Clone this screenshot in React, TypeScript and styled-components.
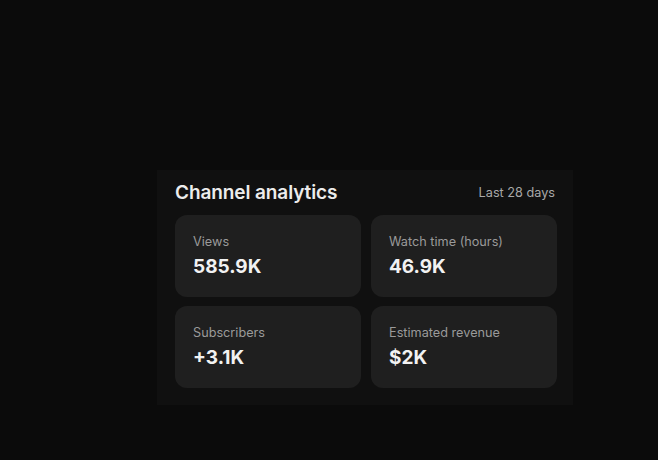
import React from "react";
import styled, { createGlobalStyle } from "styled-components";

const GlobalStyle = createGlobalStyle`
    html, body {
        margin: 0;
        padding: 0;
        background: #0b0b0b;
        font-family: Inter, "Noto Sans", sans-serif;
    }
`;

type Metric = { label: string; value: string };

const metrics: Metric[] = [
    { label: "Views", value: "585.9K" },
    { label: "Watch time (hours)", value: "46.9K" },
    { label: "Subscribers", value: "+3.1K" },
    { label: "Estimated revenue", value: "$2K" },
];

const MetricCard = ({ label, value }: Metric) => (
    <Card>
        <CardLabel>{label}</CardLabel>
        <CardValue>{value}</CardValue>
    </Card>
);

export default function App() {
    return (
        <Page>
            <GlobalStyle />
            <Panel>
                <Header>
                    <Title>Channel analytics</Title>
                    <Period>Last 28 days</Period>
                </Header>
                <Grid>
                    {metrics.map((m) => (
                        <MetricCard key={m.label} {...m} />
                    ))}
                </Grid>
            </Panel>
        </Page>
    );
}

const Page = styled.div`
    width: 658px;
    height: 460px;
    box-sizing: border-box;
    padding: 170px 0 0 157px;
`;

const Panel = styled.div`
    width: 416px;
    height: 235px;
    box-sizing: border-box;
    background: #101010;
    padding: 11px 17px 0 18px;
    display: flex;
    flex-direction: column;
`;

const Header = styled.div`
    display: flex;
    align-items: center;
    justify-content: space-between;
    height: 22px;
    margin-bottom: 12px;
`;

const Title = styled.div`
    font-size: 19px;
    font-weight: 600;
    color: #ececec;
    letter-spacing: -0.1px;
`;

const Period = styled.div`
    font-size: 12.7px;
    color: #a8a8a8;
    padding-right: 1px;
`;

const Grid = styled.div`
    display: grid;
    grid-template-columns: 186px 186px;
    grid-auto-rows: 82px;
    column-gap: 10px;
    row-gap: 9px;
`;

const Card = styled.div`
    background: #1f1f1f;
    border-radius: 12px;
    padding: 19px 18px 0;
    display: flex;
    flex-direction: column;
`;

const CardLabel = styled.div`
    font-size: 12.7px;
    color: #9a9a9a;
    line-height: 16px;
`;

const CardValue = styled.div`
    font-size: 19px;
    font-weight: 700;
    color: #f2f2f2;
    line-height: 22px;
    margin-top: 6px;
`;
